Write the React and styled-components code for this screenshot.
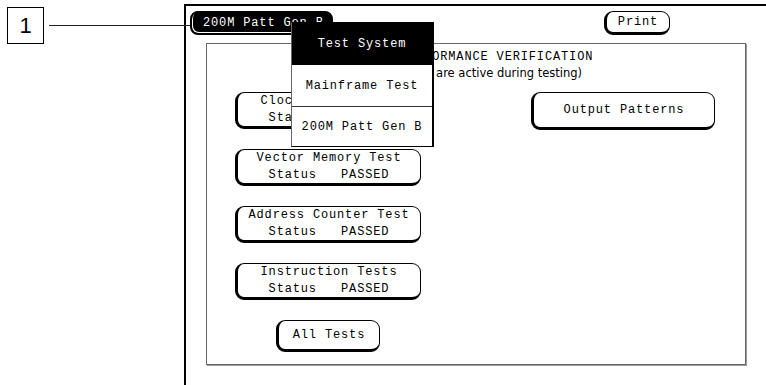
import React from "react";
import styled, { createGlobalStyle } from "styled-components";

const Global = createGlobalStyle`
  html, body { margin: 0; padding: 0; background: #fff; overflow: hidden; }
  #root { width: 766px; height: 385px; }
`;

const MONO = `"Liberation Mono", "DejaVu Sans Mono", monospace`;

const Page = styled.div`
  display: flex;
  align-items: flex-start;
  width: 766px;
  height: 385px;
  background: #fff;
`;

const Callout = styled.div`
  width: 184px;
  flex: none;
  display: flex;
  align-items: center;
  padding: 7px 0 0 7px;
  box-sizing: border-box;
`;

const CalloutBox = styled.div`
  width: 37px;
  height: 37px;
  box-sizing: border-box;
  border: 1px solid #000;
  display: flex;
  align-items: center;
  justify-content: center;
  font-family: "Liberation Sans", Arial, sans-serif;
  font-size: 22px;
  color: #000;
`;

const Leader = styled.div`
  flex: 1;
  height: 1px;
  background: #222;
  margin-left: 5px;
  margin-right: -6px;
  position: relative;
  z-index: 3;
`;

const Screen = styled.div`
  flex: 1;
  margin-top: 4px;
  height: 381px;
  box-sizing: border-box;
  border-top: 2px solid #000;
  border-left: 2px solid #000;
  position: relative;
  padding-top: 5px;
`;

const TopBar = styled.div`
  display: flex;
  align-items: flex-start;
  justify-content: space-between;
  padding: 0 96px 0 4px;
`;

const Tab = styled.div`
  width: 143px;
  height: 24px;
  box-sizing: border-box;
  background: #000;
  color: #fff;
  border: 1px solid #000;
  border-left-width: 2px;
  border-bottom-width: 2px;
  border-radius: 8px;
  box-shadow: inset 1px -1px 0 #fff;
  padding-left: 11px;
  display: flex;
  align-items: center;
  font-family: ${MONO};
  font-size: 12px;
  letter-spacing: 0.85px;
  white-space: pre;
`;

const Button = styled.div`
  width: ${(p) => p.$w}px;
  height: ${(p) => p.$h}px;
  box-sizing: border-box;
  background: #fff;
  border: 1px solid #000;
  border-left-width: 3px;
  border-bottom-width: 3px;
  border-radius: 9px;
  display: flex;
  flex-direction: column;
  align-items: center;
  justify-content: center;
  font-family: ${MONO};
  font-size: 12px;
  line-height: 17px;
  letter-spacing: 0.85px;
  color: #000;
  white-space: pre;
  flex: none;
`;

const Panel = styled.div`
  margin: 8px 0 0 20px;
  width: 540px;
  height: 322px;
  box-sizing: border-box;
  border: 1px solid #666;
  box-shadow: 1px 1px 0 #999;
  padding-top: 5px;
`;

const Heading = styled.div`
  line-height: 16px;
  color: #000;
  white-space: pre;
`;

const HeadLine = styled.div`
  padding-left: ${(p) => p.$indent}px;
  font-family: ${(p) => (p.$mono ? MONO : `"DejaVu Sans", "Liberation Sans", sans-serif`)};
  font-size: ${(p) => (p.$mono ? 12 : 11.5)}px;
  letter-spacing: ${(p) => (p.$mono ? 0.85 : 0)}px;
`;

const Columns = styled.div`
  display: flex;
  align-items: flex-start;
  margin-top: 11px;
  padding-left: 28px;
  gap: 110px;
`;

const LeftCol = styled.div`
  display: flex;
  flex-direction: column;
  align-items: center;
  gap: 20px;
`;

const Menu = styled.div`
  position: absolute;
  left: 105px;
  top: 16px;
  width: 143px;
  box-sizing: border-box;
  background: #fff;
  border: 1px solid #000;
  border-left-color: #666;
  border-right-width: 2px;
  display: flex;
  flex-direction: column;
  z-index: 2;
`;

const MenuItem = styled.div`
  height: ${(p) => p.$h}px;
  box-sizing: border-box;
  display: flex;
  align-items: center;
  justify-content: center;
  background: ${(p) => (p.$active ? "#000" : "#fff")};
  color: ${(p) => (p.$active ? "#fff" : "#000")};
  border-top: ${(p) => (p.$divider ? "1px solid #333" : "none")};
  font-family: ${MONO};
  font-size: 12px;
  letter-spacing: 0.85px;
  white-space: pre;
`;

const tests = [
  ["Clock Output Test", "Status   PASSED"],
  ["Vector Memory Test", "Status   PASSED"],
  ["Address Counter Test", "Status   PASSED"],
  ["Instruction Tests", "Status   PASSED"],
];

export default function App() {
  return (
    <>
      <Global />
      <Page>
        <Callout>
          <CalloutBox>1</CalloutBox>
          <Leader />
        </Callout>
        <Screen>
          <TopBar>
            <Tab>200M Patt Gen B</Tab>
            <Button $w={66} $h={24}>Print</Button>
          </TopBar>
          <Panel>
            <Heading>
              <HeadLine $mono $indent={193}>PERFORMANCE VERIFICATION</HeadLine>
              <HeadLine $indent={175}>(Outputs are active during testing)</HeadLine>
            </Heading>
            <Columns>
              <LeftCol>
                {tests.map(([a, b]) => (
                  <Button key={a} $w={186} $h={37}>
                    <span>{a}</span>
                    <span>{b}</span>
                  </Button>
                ))}
                <Button $w={104} $h={32}>All Tests</Button>
              </LeftCol>
              <Button $w={184} $h={38}>Output Patterns</Button>
            </Columns>
          </Panel>
          <Menu>
            <MenuItem $h={42} $active>Test System</MenuItem>
            <MenuItem $h={41}>Mainframe Test</MenuItem>
            <MenuItem $h={40} $divider>200M Patt Gen B</MenuItem>
          </Menu>
        </Screen>
      </Page>
    </>
  );
}
